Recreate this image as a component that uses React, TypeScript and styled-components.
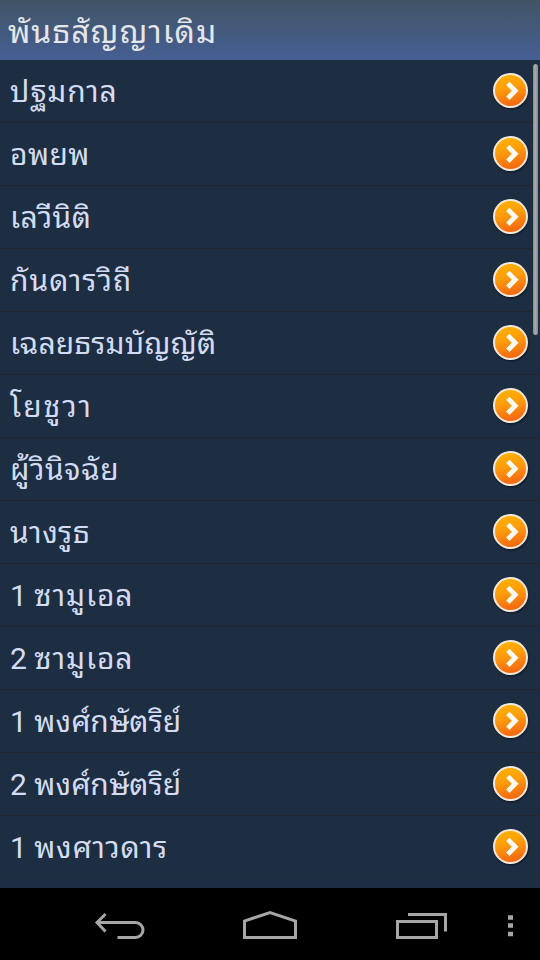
import React from "react";
import styled, { createGlobalStyle } from "styled-components";

const GlobalStyle = createGlobalStyle`
  body { margin: 0; background: #000; }
`;

const Screen = styled.div`
  display: flex;
  flex-direction: column;
  width: 540px;
  height: 960px;
  overflow: hidden;
  font-family: Roboto, "Noto Sans Thai Looped", "Noto Sans", sans-serif;
`;

const TitleBar = styled.header`
  display: flex;
  align-items: center;
  flex: none;
  box-sizing: border-box;
  height: 60px;
  padding: 4px 8px 0;
  background: linear-gradient(#415566, #455f93);
  color: #e4e6ea;
`;

const Thai = styled.span<{ $size?: number; $track?: number }>`
  font-size: ${(p) => p.$size ?? 30}px;
  letter-spacing: ${(p) => p.$track ?? 0}px;
  line-height: 40px;
`;

const ListArea = styled.main`
  position: relative;
  flex: 1;
  min-height: 0;
  overflow: hidden;
  background: #1d2d42;
`;

const Row = styled.div`
  display: flex;
  align-items: center;
  justify-content: space-between;
  box-sizing: border-box;
  height: 63px;
  padding: 0 9px 0 10px;
  border-bottom: 1px solid #20262e;
  color: #d3dcf2;

  &:nth-child(13) {
    border-bottom-color: #1e2c3e;
  }
`;

const Label = styled.div`
  font-size: 30px;
  line-height: 40px;
  white-space: pre;
  padding-top: 2px;
`;

const ScrollThumb = styled.div`
  position: absolute;
  top: 4px;
  right: 2px;
  width: 5px;
  height: 271px;
  border-radius: 3px;
  background: linear-gradient(90deg, #858789, #a9abad 45%, #858789);
`;

const NavBar = styled.nav`
  flex: none;
  height: 72px;
  background: #000;
`;

const Arrow = () => (
  <svg width="40" height="40" viewBox="0 0 40 40">
    <defs>
      <linearGradient id="disc" x1="0" y1="0" x2="0.25" y2="1">
        <stop offset="0" stopColor="#ffb400" />
        <stop offset="0.5" stopColor="#fd9c0c" />
        <stop offset="1" stopColor="#f56c12" />
      </linearGradient>
      <radialGradient id="shade">
        <stop offset="0.82" stopColor="#0b1420" stopOpacity="0.8" />
        <stop offset="1" stopColor="#0b1420" stopOpacity="0" />
      </radialGradient>
    </defs>
    <circle cx="20.3" cy="21" r="19" fill="url(#shade)" />
    <circle cx="19.5" cy="19.5" r="17.5" fill="#f3e9dc" />
    <circle cx="19.5" cy="19.5" r="15.5" fill="url(#disc)" />
    <path d="M16.8 12.4 L24.2 19.8 L16.8 27.2" fill="none" stroke="#fffaf0" strokeWidth="4.8" />
  </svg>
);

const books: { num?: string; name: string; track?: number }[] = [
  { name: "ปฐมกาล", track: 0.8 },
  { name: "อพยพ", track: 0.45 },
  { name: "เลวีนิติ", track: 0.4 },
  { name: "กันดารวิถี", track: 1 },
  { name: "เฉลยธรมบัญญัติ", track: 0.1 },
  { name: "โยชูวา", track: 2 },
  { name: "ผู้วินิจฉัย", track: 0.6 },
  { name: "นางรูธ", track: 0.4 },
  { num: "1", name: "ซามูเอล", track: 0.9 },
  { num: "2", name: "ซามูเอล", track: 0.9 },
  { num: "1", name: "พงศ์กษัตริย์", track: 0.1 },
  { num: "2", name: "พงศ์กษัตริย์", track: 0.1 },
  { num: "1", name: "พงศาวดาร", track: 0.75 },
];

export default function App() {
  return (
    <Screen>
      <GlobalStyle />
      <TitleBar>
        <Thai $size={31.8} $track={1.05}>พันธสัญญาเดิม</Thai>
      </TitleBar>
      <ListArea>
        {books.map((b, i) => (
          <Row key={i}>
            <Label>
              {b.num ? b.num + " " : ""}
              <Thai $track={b.track}>{b.name}</Thai>
            </Label>
            <Arrow />
          </Row>
        ))}
        <ScrollThumb />
      </ListArea>
      <NavBar>
        <svg width="540" height="72" viewBox="0 0 540 72" fill="none" stroke="#a6a6a6" strokeWidth="3">
          <path d="M105.5 26 L97 34.5 L105.5 43.5 M97 34.5 H135.5 A7.5 7.5 0 0 1 135.5 49.5 H117.5" />
          <path d="M244.5 49.5 V33 L270 24.5 L295.5 33 V49.5 Z" />
          <path d="M397.5 33.5 H436.5 V49.5 H397.5 Z M408 26.5 H445.5 V43.5" />
          <path d="M508 29.5 H513 M508 37.5 H513 M508 46 H513" strokeWidth="4.5" />
        </svg>
      </NavBar>
    </Screen>
  );
}
